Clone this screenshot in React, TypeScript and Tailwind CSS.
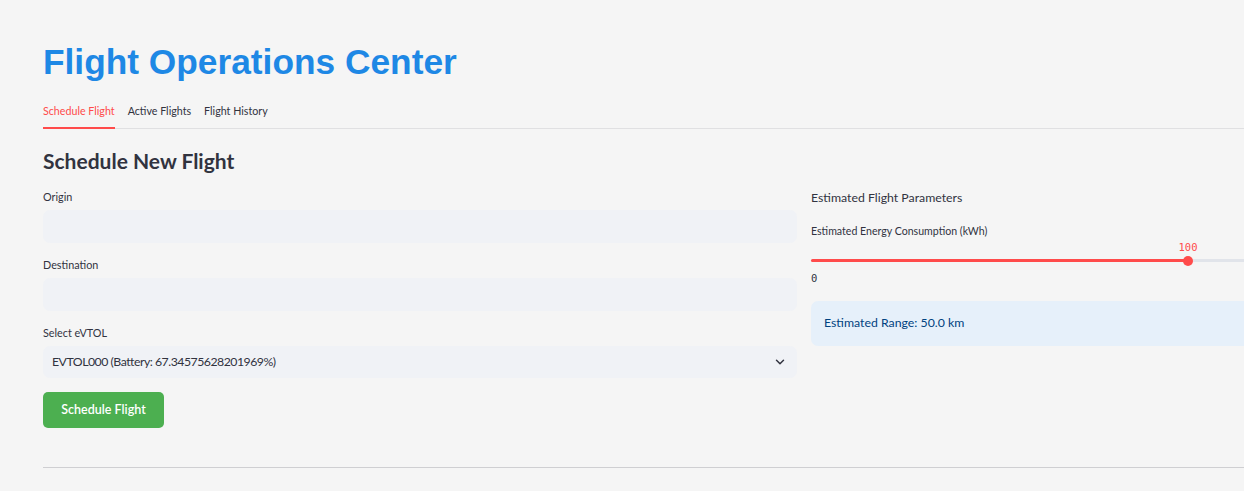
import React from "react";
import { ChevronDown } from "lucide-react";

const sans = "font-['Lato','Noto_Sans',sans-serif]";

function Field({ label, children }: { label: string; children: React.ReactNode }) {
  return (
    <div className="flex flex-col">
      <label className="text-[10.8px] leading-[14px] text-[#31333F] mb-[6px]">{label}</label>
      {children}
    </div>
  );
}

function TextInput() {
  return <div className="h-[33px] w-full rounded-[7px] bg-[#F0F2F6]" />;
}

export default function App() {
  return (
    <div className={`w-[1244px] h-[491px] overflow-hidden bg-[#F5F5F5] ${sans}`}>
      <div className="w-[1522px] ml-[43px] pt-[42px]">
        <h1 className="font-['Liberation_Sans',Arial,sans-serif] font-bold text-[35.3px] leading-[40px] text-[#1E88E5]">
          Flight Operations Center
        </h1>

        {/* tabs */}
        <div className="mt-[22px] flex gap-[13px] border-b border-[#E0E0E2] text-[10.7px] leading-[14px] text-[#31333F]">
          <div className="pb-[9px] border-b-2 border-[#FF4B4B] -mb-px text-[#FF4B4B]">Schedule Flight</div>
          <div className="pb-[9px]">Active Flights</div>
          <div className="pb-[9px]">Flight History</div>
        </div>

        <h3 className="mt-[19px] text-[21px] leading-[26px] font-bold text-[#31333F]">Schedule New Flight</h3>

        <div className="mt-[16px] flex gap-[14px]">
          {/* left column */}
          <div className="w-[754px] flex flex-col">
            <Field label="Origin">
              <TextInput />
            </Field>
            <div className="mt-[15px]">
              <Field label="Destination">
                <TextInput />
              </Field>
            </div>
            <div className="mt-[15px]">
              <Field label="Select eVTOL">
                <div className="h-[32px] w-full rounded-[7px] bg-[#F0F2F6] flex items-center justify-between pl-[9px] pr-[10px] text-[12.3px] tracking-[-0.5px] text-[#31333F]">
                  <span>EVTOL000 (Battery: 67.34575628201969%)</span>
                  <ChevronDown size={14} strokeWidth={2.5} className="text-[#31333F]" />
                </div>
              </Field>
            </div>
            <button className="mt-[14px] w-[121px] h-[36px] rounded-[5px] bg-[#4CAF50] text-white text-[12.5px] font-semibold pt-[1px]">
              Schedule Flight
            </button>
          </div>

          {/* right column */}
          <div className="w-[754px] flex flex-col">
            <div className="text-[12.3px] leading-[16px] text-[#31333F]">Estimated Flight Parameters</div>
            <div className="mt-[18px] text-[10.6px] leading-[14px] text-[#31333F]">
              Estimated Energy Consumption (kWh)
            </div>
            <div className="relative mt-[3px] h-[44px]">
              <div className="absolute top-[18px] left-0 right-0 h-[3px] rounded-full bg-[#E1E4EA]" />
              <div className="absolute top-[18px] left-0 w-1/2 h-[3px] rounded-full bg-[#FF4B4B]" />
              <div className="absolute top-[14.5px] left-1/2 -ml-[5px] w-[10px] h-[10px] rounded-full bg-[#FF4B4B]" />
              <div className="absolute top-0 left-1/2 -translate-x-1/2 font-['DejaVu_Sans_Mono',monospace] text-[10.5px] leading-[12px] text-[#FF4B4B]">
                100
              </div>
              <div className="absolute top-[31px] left-0 font-['DejaVu_Sans_Mono',monospace] text-[10.5px] leading-[12px] text-[#31333F]">
                0
              </div>
            </div>
            <div className="mt-[16px] h-[45px] rounded-[7px] bg-[#E6F0FA] flex items-center pl-[13px] text-[12.3px] text-[#004280]">
              Estimated Range: 50.0 km
            </div>
          </div>
        </div>

        <div className="mt-[39px] border-t border-[#CFCFD2]" />
      </div>
    </div>
  );
}
